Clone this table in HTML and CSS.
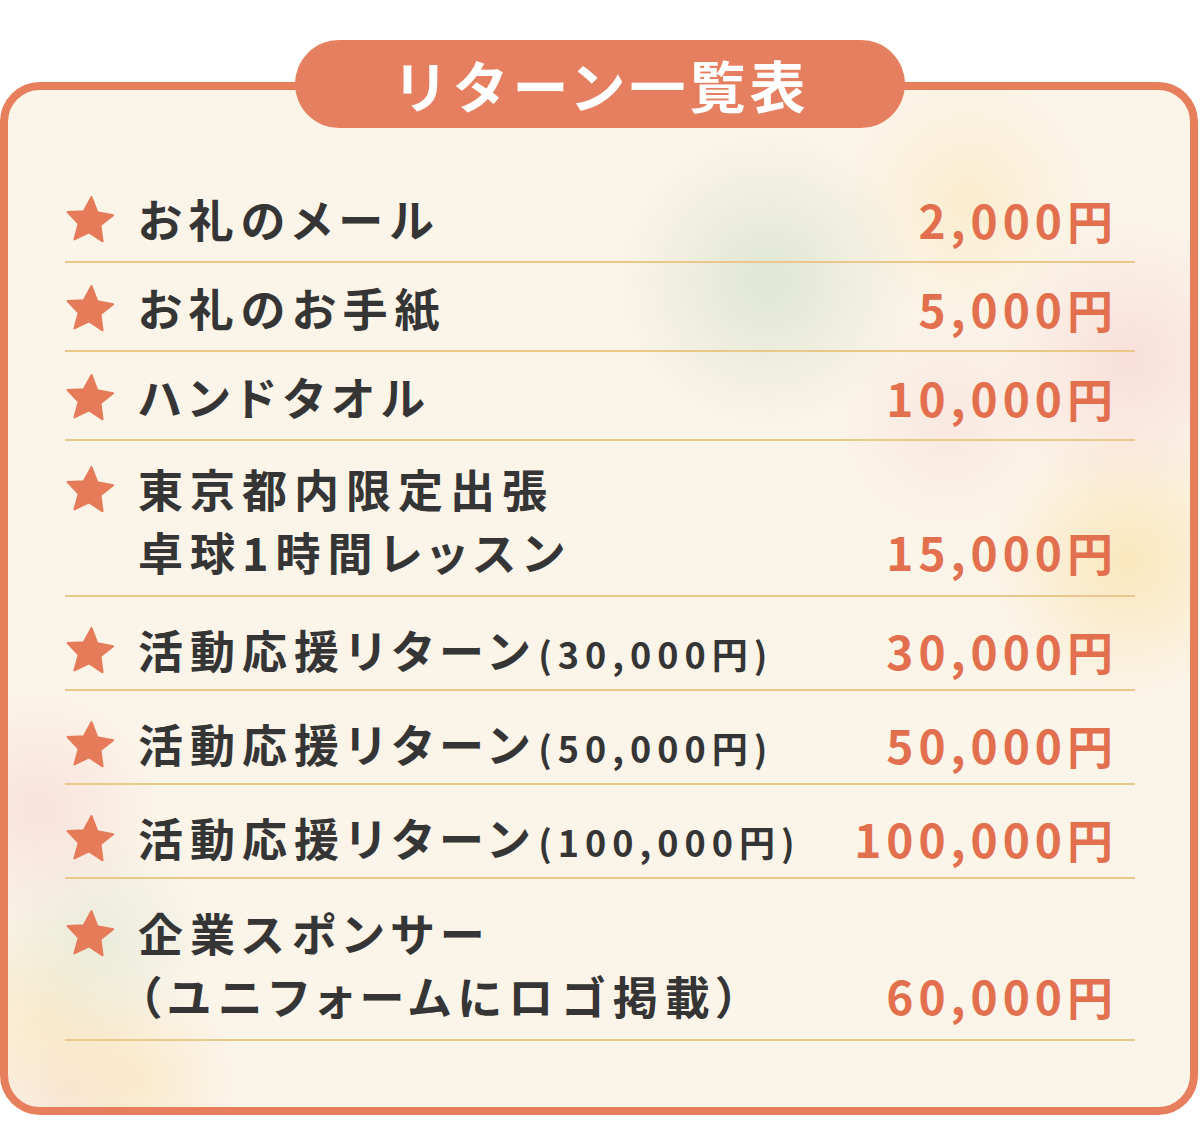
FILE: index.html
```html
<!DOCTYPE html>
<html lang="ja">
<head>
<meta charset="utf-8">
<title>リターン一覧表</title>
<link rel="stylesheet" href="styles.css">
</head>
<body>
<svg width="0" height="0" class="defs" aria-hidden="true">
  <defs>
    <symbol id="star" viewBox="0 0 50 48">
      <path d="M25 2 L31.76 16.7 L47.83 18.58 L35.94 29.55 L39.11 45.42 L25 37.5 L10.89 45.42 L14.06 29.55 L2.17 18.58 L18.24 16.7 Z" fill="#E57B59" stroke="#E57B59" stroke-width="2" stroke-linejoin="round" transform="rotate(4 25 24)"/>
    </symbol>
  </defs>
</svg>
<section class="card">
  <h1 class="title">リターン一覧表</h1>
  <ul class="list">
    <li class="row">
      <span class="star"><svg width="50" height="48"><use href="#star"/></svg></span>
      <span class="name">お礼のメール</span>
      <span class="price">2,000円</span>
    </li>
    <li class="row">
      <span class="star"><svg width="50" height="48"><use href="#star"/></svg></span>
      <span class="name">お礼のお手紙</span>
      <span class="price">5,000円</span>
    </li>
    <li class="row">
      <span class="star"><svg width="50" height="48"><use href="#star"/></svg></span>
      <span class="name">ハンドタオル</span>
      <span class="price">10,000円</span>
    </li>
    <li class="row row--multi">
      <span class="star"><svg width="50" height="48"><use href="#star"/></svg></span>
      <span class="name">東京都内限定出張<br>卓球1時間レッスン</span>
      <span class="price">15,000円</span>
    </li>
    <li class="row row--wide">
      <span class="star"><svg width="50" height="48"><use href="#star"/></svg></span>
      <span class="name">活動応援リターン<small class="sub">(30,000円)</small></span>
      <span class="price">30,000円</span>
    </li>
    <li class="row row--wide">
      <span class="star"><svg width="50" height="48"><use href="#star"/></svg></span>
      <span class="name">活動応援リターン<small class="sub">(50,000円)</small></span>
      <span class="price">50,000円</span>
    </li>
    <li class="row row--wide">
      <span class="star"><svg width="50" height="48"><use href="#star"/></svg></span>
      <span class="name">活動応援リターン<small class="sub">(100,000円)</small></span>
      <span class="price">100,000円</span>
    </li>
    <li class="row row--multi row--last">
      <span class="star"><svg width="50" height="48"><use href="#star"/></svg></span>
      <span class="name">企業スポンサー<br>（ユニフォームにロゴ掲載）</span>
      <span class="price">60,000円</span>
    </li>
  </ul>
</section>
</body>
</html>
```

FILE: styles.css
```css
* {
  box-sizing: border-box;
}

html, body {
  margin: 0;
  padding: 0;
  background: #ffffff;
}

body {
  font-family: "Noto Sans CJK JP", "Noto Sans", sans-serif;
  color: #333333;
  width: 1200px;
  height: 1143px;
  overflow: hidden;
}

.defs {
  position: absolute;
  width: 0;
  height: 0;
}

.card {
  margin: 82px 2px 0 0;
  width: 1198px;
  border: 8px solid #E77E5C;
  border-radius: 40px;
  padding: 0 55px 66px 57px;
  background-color: #FBF4E9;
  background-image:
    radial-gradient(circle at 760px 190px, rgba(214, 226, 204, 0.75) 0, rgba(214, 226, 204, 0) 150px),
    radial-gradient(circle at 960px 110px, rgba(250, 232, 190, 0.6) 0, rgba(250, 232, 190, 0) 130px),
    radial-gradient(circle at 1120px 270px, rgba(248, 218, 214, 0.8) 0, rgba(248, 218, 214, 0) 140px),
    radial-gradient(circle at 940px 330px, rgba(248, 222, 216, 0.55) 0, rgba(248, 222, 216, 0) 110px),
    radial-gradient(circle at 1120px 470px, rgba(250, 228, 178, 0.8) 0, rgba(250, 228, 178, 0) 140px),
    radial-gradient(circle at 30px 720px, rgba(248, 220, 214, 0.75) 0, rgba(248, 220, 214, 0) 120px),
    radial-gradient(circle at 90px 850px, rgba(222, 232, 212, 0.6) 0, rgba(222, 232, 212, 0) 110px),
    radial-gradient(circle at 40px 930px, rgba(250, 230, 190, 0.7) 0, rgba(250, 230, 190, 0) 120px),
    radial-gradient(circle at 130px 990px, rgba(250, 228, 186, 0.6) 0, rgba(250, 228, 186, 0) 100px),
    radial-gradient(circle at 60px 1000px, rgba(246, 220, 214, 0.6) 0, rgba(246, 220, 214, 0) 90px);
}

.title {
  margin: -50px auto 0;
  width: 610px;
  height: 88px;
  border-radius: 44px;
  background: #E67F5F;
  color: #ffffff;
  font-size: 56px;
  font-weight: 700;
  line-height: 88px;
  letter-spacing: 4px;
  text-indent: 2px;
  text-align: center;
}

.list {
  list-style: none;
  margin: 46px 0 0;
  padding: 0;
}

.row {
  display: flex;
  align-items: flex-start;
  padding: 21px 0 18px;
  border-bottom: 2px solid #EAC88C;
  font-size: 45px;
  line-height: 48px;
  font-weight: 700;
}

.row--wide {
  padding: 29px 0 15px;
}

.row--multi {
  padding: 16px 0 12px;
  line-height: 63px;
}

.row--last {
  padding: 22px 0 12px;
}

.star {
  flex: none;
  width: 50px;
  height: 48px;
  margin-right: 23px;
  display: flex;
  align-items: center;
}

.row--multi .star {
  height: 63px;
}

.star svg {
  display: block;
}

.name {
  flex: 1;
  letter-spacing: 7px;
  font-feature-settings: "palt";
  color: #353535;
}

.sub {
  font-size: 36px;
  line-height: 1;
  letter-spacing: 6px;
  margin-left: 2px;
}

.price {
  flex: none;
  align-self: flex-end;
  padding-right: 17px;
  font-size: 46px;
  letter-spacing: 5px;
  color: #E2704E;
  font-weight: 700;
}
```
